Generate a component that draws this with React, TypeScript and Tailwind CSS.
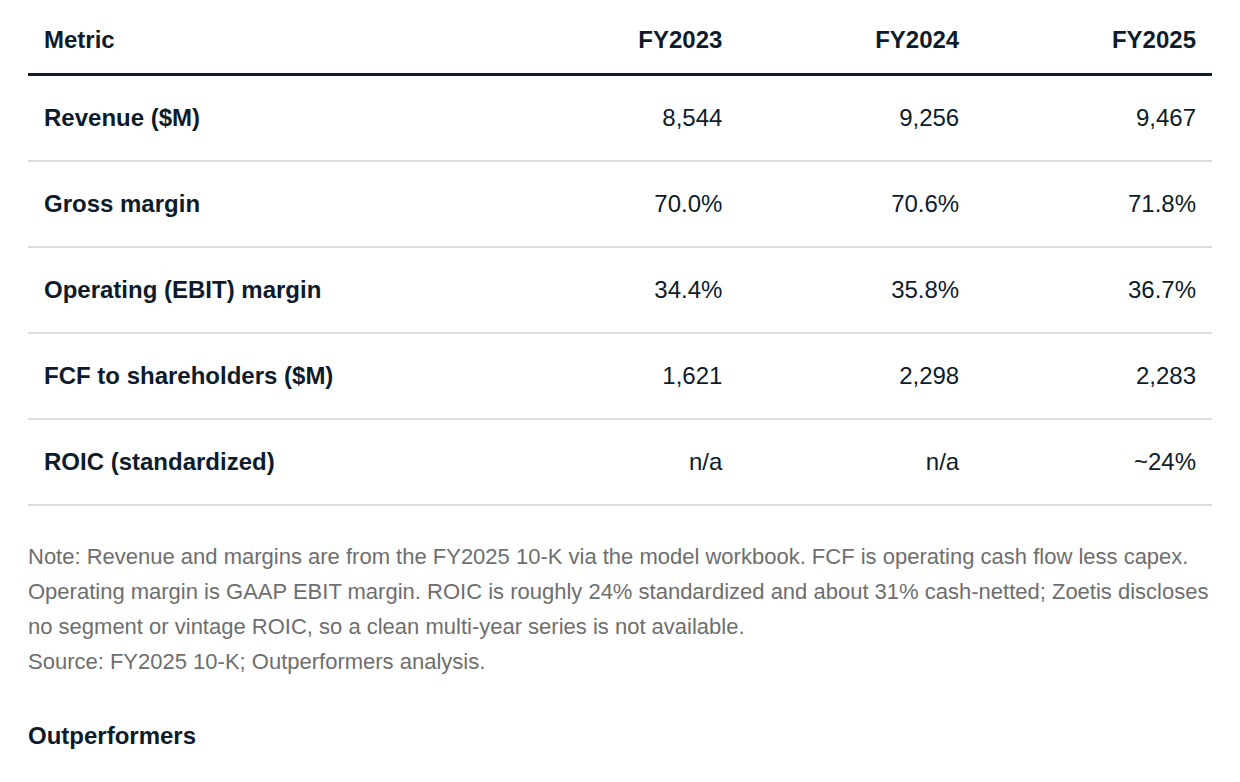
import React from "react";

const rows = [
  ["Revenue ($M)", "8,544", "9,256", "9,467"],
  ["Gross margin", "70.0%", "70.6%", "71.8%"],
  ["Operating (EBIT) margin", "34.4%", "35.8%", "36.7%"],
  ["FCF to shareholders ($M)", "1,621", "2,298", "2,283"],
  ["ROIC (standardized)", "n/a", "n/a", "~24%"],
];

export default function App() {
  return (
    <div
      className="min-h-screen bg-white px-[28px] text-[#0d1b2a]"
      style={{ fontFamily: '"Liberation Sans", Arial, sans-serif' }}
    >
      <div className="w-full">
        <div className="grid grid-cols-[2fr_1fr_1fr_1fr] border-b-[3px] border-[#0d1b2a] text-[24px] font-bold leading-[36px]">
          <div className="px-4 pt-[22px] pb-[15px]">Metric</div>
          <div className="px-4 pt-[22px] pb-[15px] text-right">FY2023</div>
          <div className="px-4 pt-[22px] pb-[15px] text-right">FY2024</div>
          <div className="px-4 pt-[22px] pb-[15px] text-right">FY2025</div>
        </div>
        {rows.map((r) => (
          <div
            key={r[0]}
            className="grid grid-cols-[2fr_1fr_1fr_1fr] border-b-2 border-[#dedede] text-[24px] leading-[36px]"
          >
            <div className="px-4 py-[24px] font-bold">{r[0]}</div>
            <div className="px-4 py-[24px] text-right">{r[1]}</div>
            <div className="px-4 py-[24px] text-right">{r[2]}</div>
            <div className="px-4 py-[24px] text-right">{r[3]}</div>
          </div>
        ))}
      </div>
      <div className="mt-[33px] text-[22px] leading-[35px] text-[#6e6e6e]">
        <p>
          Note: Revenue and margins are from the FY2025 10-K via the model workbook. FCF is operating cash flow less capex.
          Operating margin is GAAP EBIT margin. ROIC is roughly 24% standardized and about 31% cash-netted; Zoetis discloses
          no segment or vintage ROIC, so a clean multi-year series is not available.
        </p>
        <p>Source: FY2025 10-K; Outperformers analysis.</p>
      </div>
      <h2 className="mt-[39px] text-[24px] font-bold leading-[36px] text-[#0d1b2a]">Outperformers</h2>
    </div>
  );
}
